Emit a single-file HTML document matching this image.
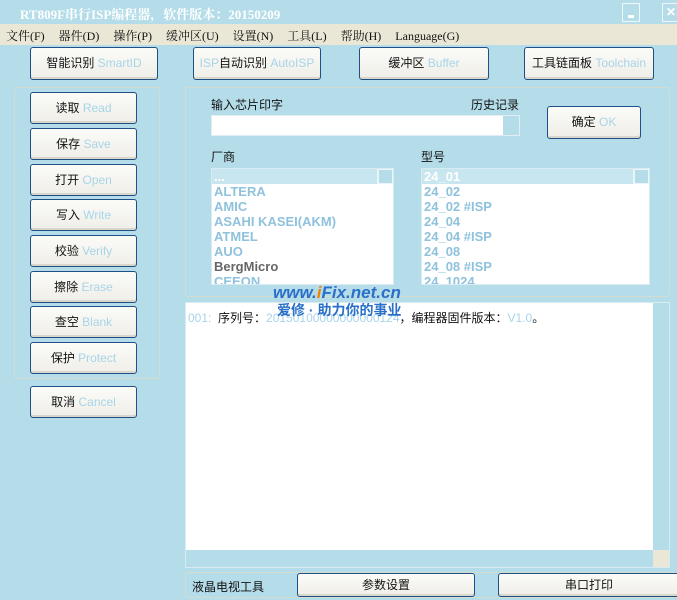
<!DOCTYPE html>
<html><head><meta charset="utf-8"><style>
*{margin:0;padding:0;box-sizing:border-box}
body{width:677px;height:600px;overflow:hidden;background:#b5dde9;font-family:"Liberation Sans","Noto Sans CJK SC",sans-serif;font-size:12px;color:#111;position:relative}
.a{position:absolute}
.btn{position:absolute;background:linear-gradient(#fbfbf8,#efeee8);border:1px solid #1f4f86;border-radius:3px;text-align:center;box-shadow:inset 0 -2px 0 #d9d6cc;font-size:12px}
.en{color:#a8d4e8}
.list{position:absolute;background:#fff;border:1px solid #d8eaf2;overflow:hidden;font-size:13px;color:#8fc2dc;font-weight:bold}
.list div{height:15px;line-height:15px;padding-left:2px}
.sb{position:absolute;right:0;top:0;bottom:0;width:16px;background:#b5dde9;border-left:1px solid #e6f3f8}
.sq{position:absolute;width:15px;height:15px;border:1px solid #eaf5f9;background:#b5dde9}
</style></head><body>
<div class="a" style="left:20px;top:4px;color:#fff;font-weight:bold;font-family:'Liberation Serif','Noto Serif CJK SC',serif;font-size:13px">RT809F串行ISP编程器，软件版本：20150209</div>
<div class="a" style="left:622px;top:3px;width:18px;height:19px;border:1px solid #eef7fa"><div class="a" style="left:5px;top:11px;width:6px;height:3px;background:#fff"></div></div>
<div class="a" style="left:662px;top:3px;width:18px;height:19px;border:1px solid #eef7fa;color:#fff;font-weight:bold;padding-left:3px;line-height:17px">✕</div>
<div class="a" style="left:0;top:24px;width:677px;height:21px;background:#ebe7d6"></div>
<div class="a" style="left:6px;top:27px;font-size:12px;font-family:'Liberation Serif','Noto Serif CJK SC',serif;word-spacing:4px;white-space:pre">文件(F)  器件(D)  操作(P)  缓冲区(U)  设置(N)  工具(L)  帮助(H)  Language(G)</div>
<div class="btn" style="left:30px;top:47px;width:128px;height:33px;line-height:31px">智能识别 <span class="en">SmartID</span></div>
<div class="btn" style="left:193px;top:47px;width:128px;height:33px;line-height:31px"><span class="en">ISP</span>自动识别 <span class="en">AutoISP</span></div>
<div class="btn" style="left:359px;top:47px;width:130px;height:33px;line-height:31px">缓冲区 <span class="en">Buffer</span></div>
<div class="btn" style="left:524px;top:47px;width:130px;height:33px;line-height:31px">工具链面板 <span class="en">Toolchain</span></div>
<div class="a" style="left:14px;top:87px;width:146px;height:292px;border:1px solid #d4dccf;border-radius:3px"></div>
<div class="btn" style="left:30px;top:92px;width:107px;height:32px;line-height:30px">读取 <span class="en">Read</span></div>
<div class="btn" style="left:30px;top:128px;width:107px;height:32px;line-height:30px">保存 <span class="en">Save</span></div>
<div class="btn" style="left:30px;top:164px;width:107px;height:32px;line-height:30px">打开 <span class="en">Open</span></div>
<div class="btn" style="left:30px;top:199px;width:107px;height:32px;line-height:30px">写入 <span class="en">Write</span></div>
<div class="btn" style="left:30px;top:235px;width:107px;height:32px;line-height:30px">校验 <span class="en">Verify</span></div>
<div class="btn" style="left:30px;top:271px;width:107px;height:32px;line-height:30px">擦除 <span class="en">Erase</span></div>
<div class="btn" style="left:30px;top:306px;width:107px;height:32px;line-height:30px">查空 <span class="en">Blank</span></div>
<div class="btn" style="left:30px;top:342px;width:107px;height:32px;line-height:30px">保护 <span class="en">Protect</span></div>
<div class="btn" style="left:30px;top:386px;width:107px;height:32px;line-height:30px">取消 <span class="en">Cancel</span></div>
<div class="a" style="left:185px;top:87px;width:485px;height:210px;border:1px solid #d4dccf;border-radius:3px"></div>
<div class="a" style="left:211px;top:96px">输入芯片印字</div>
<div class="a" style="left:471px;top:96px">历史记录</div>
<div class="a" style="left:211px;top:115px;width:309px;height:21px;background:#fff;border:1px solid #e0eef4"><div class="a" style="right:0;top:0;width:16px;height:19px;background:#b5dde9"></div></div>
<div class="btn" style="left:547px;top:106px;width:94px;height:33px;line-height:31px">确定 <span class="en">OK</span></div>
<div class="a" style="left:211px;top:148px">厂商</div>
<div class="a" style="left:421px;top:148px">型号</div>
<div class="list" style="left:211px;top:168px;width:183px;height:117px">
<div style="background:#c8e6f0;color:#fff">...</div><div>ALTERA</div><div>AMIC</div><div>ASAHI KASEI(AKM)</div><div>ATMEL</div><div>AUO</div><div style="color:#666">BergMicro</div><div>CEEON</div>
<div class="sb"><div class="sq" style="left:0;top:0"></div><div class="sq" style="left:0;bottom:0"></div></div></div>
<div class="list" style="left:421px;top:168px;width:229px;height:117px">
<div style="background:#c8e6f0;color:#fff">24_01</div><div>24_02</div><div>24_02 #ISP</div><div>24_04</div><div>24_04 #ISP</div><div>24_08</div><div>24_08 #ISP</div><div>24_1024</div>
<div class="sb"><div class="sq" style="left:0;top:0"></div><div class="sq" style="left:0;bottom:0"></div></div></div>
<div class="a" style="left:185px;top:302px;width:485px;height:266px;background:#fff;border:1px solid #d8eaf2">
<div class="a" style="left:0;right:16px;bottom:0;height:17px;background:#b5dde9"></div>
<div class="a" style="right:0;top:0;bottom:0;width:16px;background:#b5dde9"></div>
<div class="a" style="right:0;bottom:0;width:16px;height:17px;background:#ebe7d6"></div>
</div>
<div class="a" style="left:188px;top:309px;font-size:12px;white-space:pre"><span class="en">001:</span>  序列号：<span class="en">20150100000000000124</span>，编程器固件版本：<span class="en">V1.0</span>。</div>
<div class="a" style="left:273px;top:283px;color:#2a70c8;font-weight:bold;font-style:italic;font-size:17px">www.<span style="color:#f08000">i</span>Fix.net.cn</div>
<div class="a" style="left:277px;top:300px;color:#2a70c8;font-weight:bold;font-size:14px">爱修 · 助力你的事业</div>
<div class="a" style="left:185px;top:572px;width:492px;height:26px;border:1px solid #d4dccf;border-radius:3px"></div>
<div class="a" style="left:192px;top:578px">液晶电视工具</div>
<div class="btn" style="left:297px;top:573px;width:178px;height:24px;line-height:22px">参数设置</div>
<div class="btn" style="left:498px;top:573px;width:182px;height:24px;line-height:22px">串口打印</div>
</body></html>
